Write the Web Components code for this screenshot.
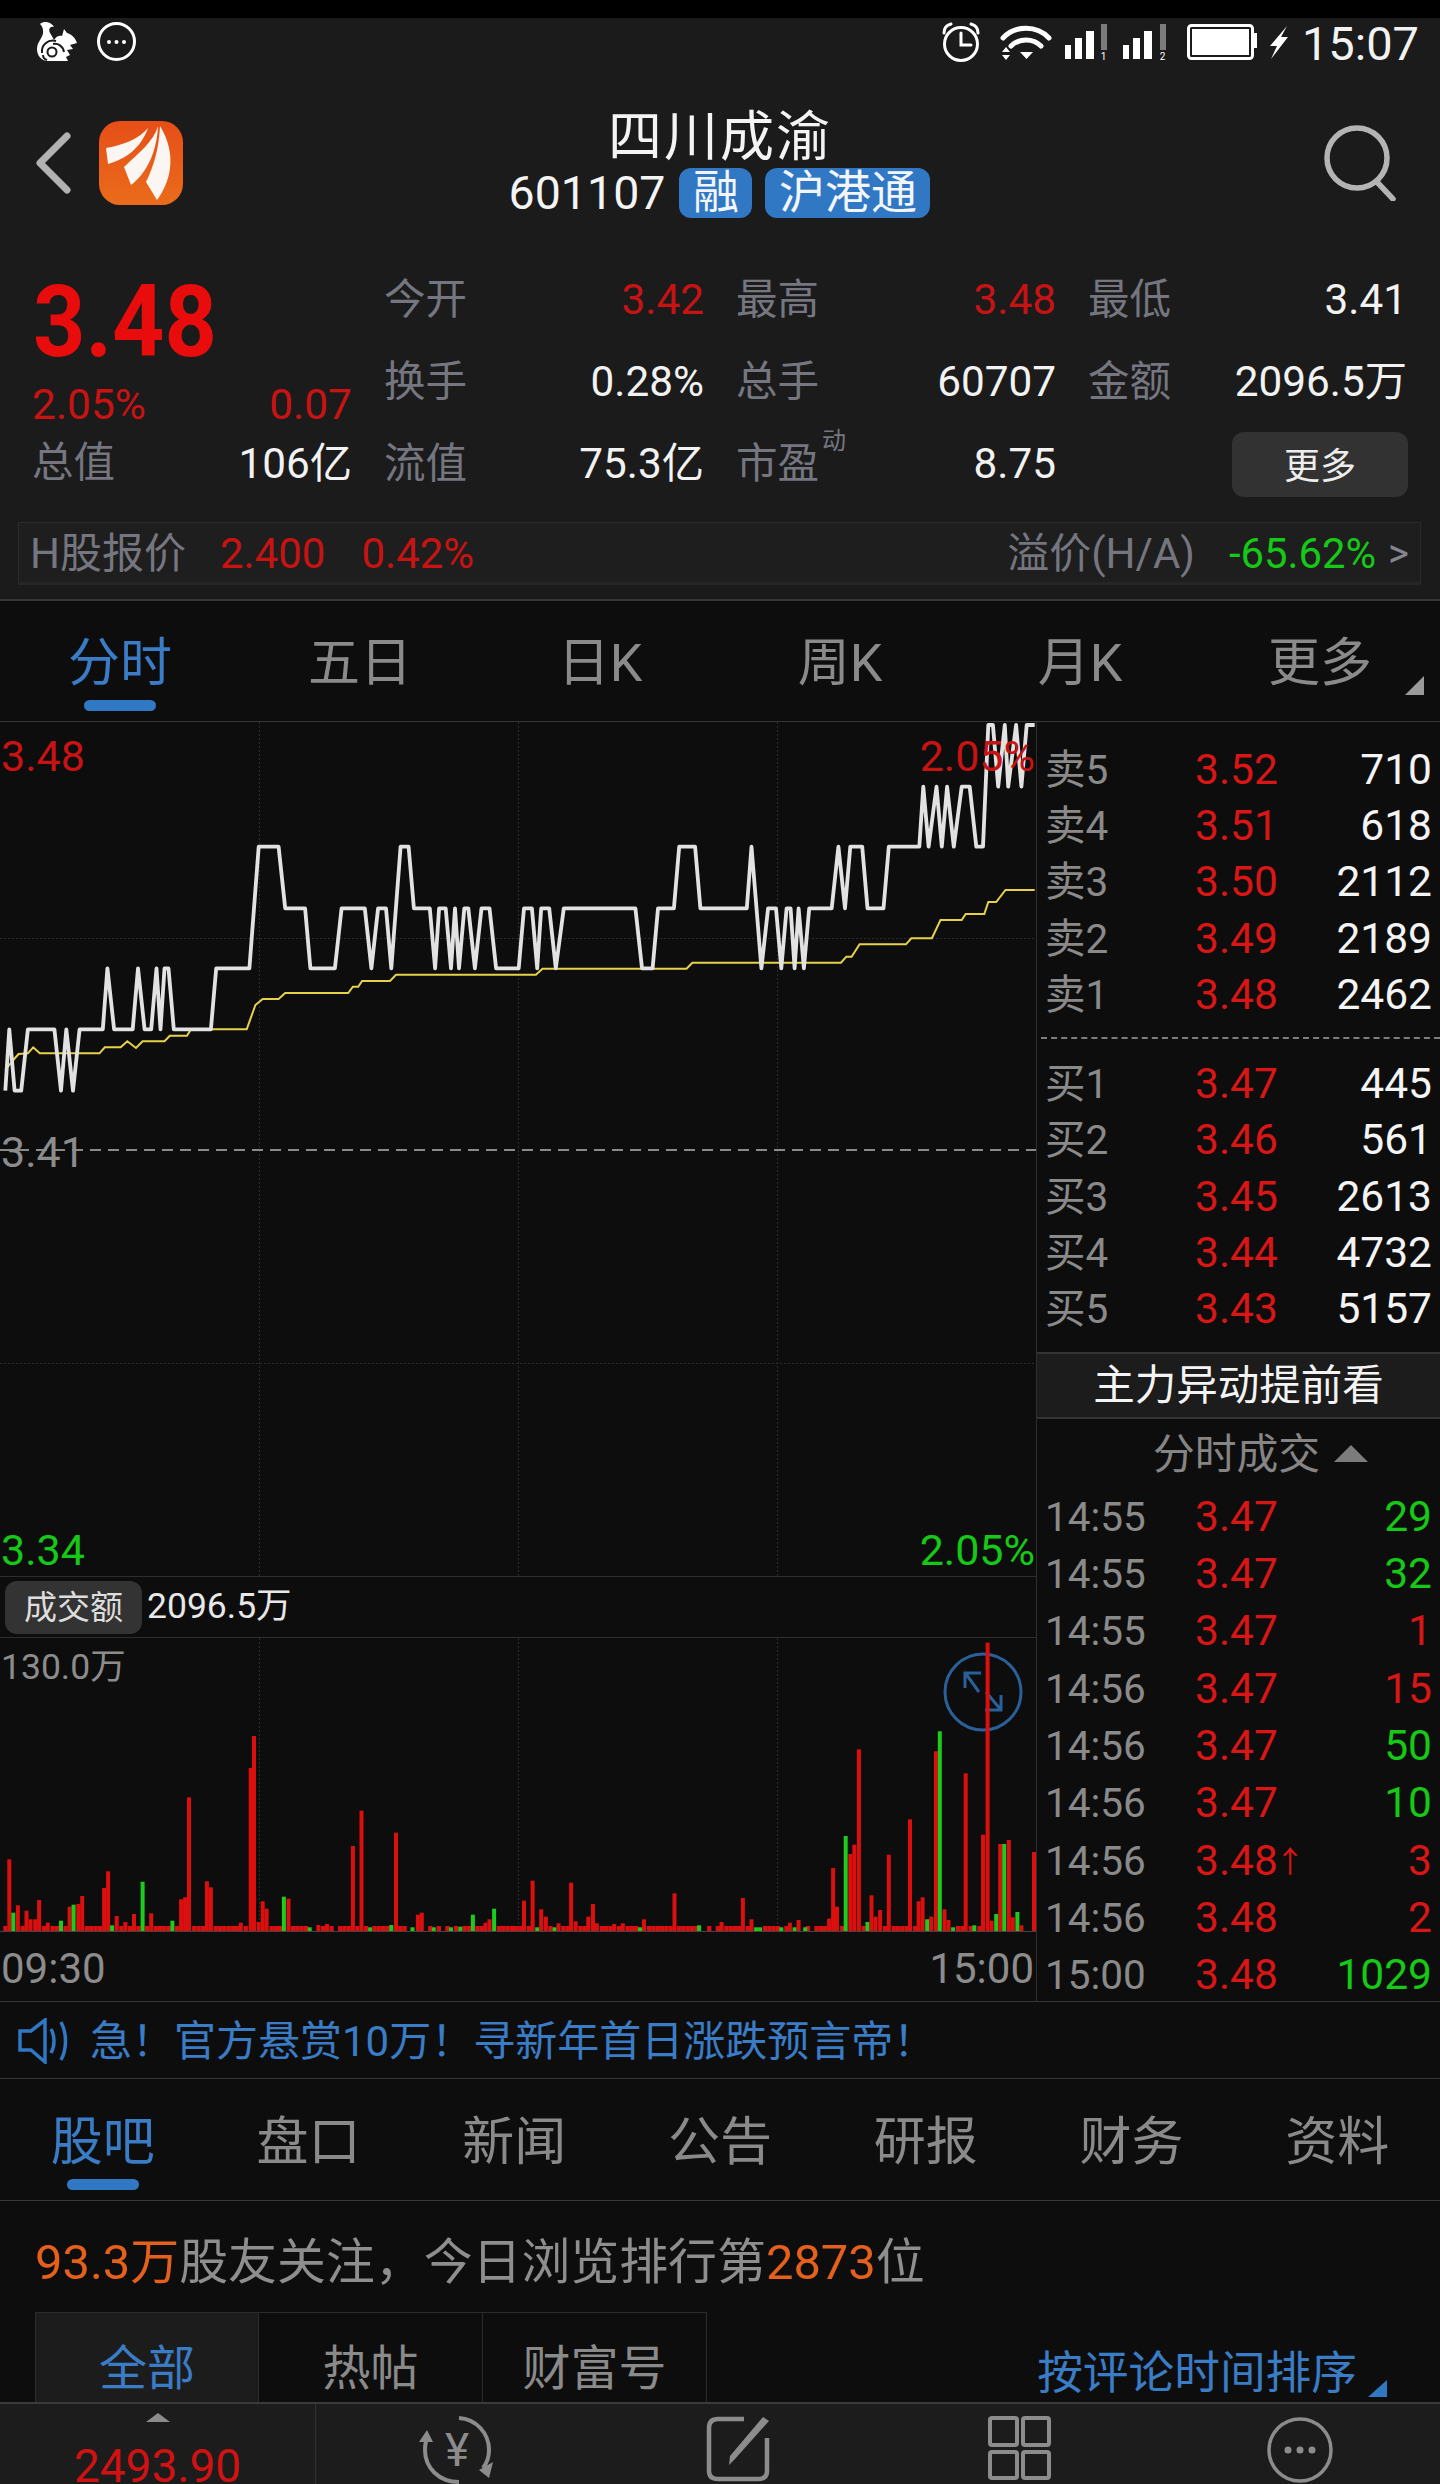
<!DOCTYPE html>
<html lang="zh">
<head>
<meta charset="utf-8">
<title>四川成渝</title>
<style>
html,body{margin:0;padding:0;background:#0d0d0d}
body{width:1440px;height:2484px;overflow:hidden;font-family:Roboto,"Noto Sans CJK SC",sans-serif;color:#eee}
</style>
</head>
<body>
<status-bar></status-bar>
<stock-header></stock-header>
<quote-panel>
  <quote-cell label="今开" tone="red">3.42</quote-cell>
  <quote-cell label="最高" tone="red">3.48</quote-cell>
  <quote-cell label="最低">3.41</quote-cell>
  <quote-cell label="换手">0.28%</quote-cell>
  <quote-cell label="总手">60707</quote-cell>
  <quote-cell label="金额">2096.5万</quote-cell>
  <quote-cell label="流值">75.3亿</quote-cell>
  <quote-cell label="市盈" sup="动">8.75</quote-cell>
  <more-button>更多</more-button>
</quote-panel>
<hk-bar></hk-bar>
<tab-strip kind="period">
  <tab-item active>分时</tab-item><tab-item>五日</tab-item><tab-item>日K</tab-item><tab-item>周K</tab-item><tab-item>月K</tab-item><tab-item corner>更多</tab-item>
</tab-strip>
<market-board></market-board>
<notice-bar>急！官方悬赏10万！寻新年首日涨跌预言帝！</notice-bar>
<tab-strip kind="news">
  <tab-item active>股吧</tab-item><tab-item>盘口</tab-item><tab-item>新闻</tab-item><tab-item>公告</tab-item><tab-item>研报</tab-item><tab-item>财务</tab-item><tab-item>资料</tab-item>
</tab-strip>
<community-panel></community-panel>
<bottom-bar></bottom-bar>

<script>
const FONT='Roboto,"Noto Sans CJK SC",sans-serif';
class Base extends HTMLElement{
  connectedCallback(){
    if(this.shadowRoot)return;
    this.attachShadow({mode:'open'}).innerHTML=this.render();
  }
  attr(n,d=''){return this.getAttribute(n)??d}
}
const reg=(n,f)=>customElements.define(n,class extends Base{render(){return f(this)}});

reg('status-bar',()=>`<style>
:host{display:flex;box-sizing:border-box;height:80px;background:#1b1b1b;border-top:18px solid #000;align-items:flex-start;font-family:${FONT}}
svg{display:block}
.l{margin:4px 0 0 36px}.r{margin:4px 0 0 auto}
.t{margin:10px 21px 0 12px;font-size:47px;line-height:32px;color:#f2f2f2;height:32px}
</style>
<svg class="l" width="102" height="40" viewBox="36 22 102 40">
 <path fill="#fff" d="M40 24C45 20 52 23 54 27 50 26 48 29 50 33 52 36 53 38 54 40 56 36 60 35 62 36L64 29 67 33C71 34 75 37 77 43L70 45 73 49 67 50 70 55 66 57 68 61H48C41 61 37 55 37 49 37 41 44 37 43 31 43 28 42 26 40 24Z"/>
 <g fill="none" stroke="#1b1b1b" stroke-width="2"><circle cx="52" cy="52" r="4.500"/><path d="M42 53c-1-8 6-14 14-12M47 60c-3-1-4-3-4-5M64 52c-1-6-6-9-11-8"/></g>
 <ellipse cx="116.500" cy="41.500" rx="18" ry="18" fill="none" stroke="#fff" stroke-width="3"/>
 <circle cx="109" cy="42" r="2" fill="#fff"/><circle cx="116.500" cy="42" r="2" fill="#fff"/><circle cx="124" cy="42" r="2" fill="#fff"/>
</svg>
<svg class="r" width="350" height="42" viewBox="942 22 350 42">
 <g fill="none" stroke="#fff" stroke-width="3" stroke-linecap="round">
  <circle cx="963" cy="44" r="16.500"/><path d="M963 33v12h10"/>
  <path d="M946 33c0-5 3-8 7-9M980 33c0-5-3-8-7-9" stroke-width="3"/>
  <path d="M1005 38c12-13 34-13 46 0" stroke-width="5"/><path d="M1013 46c8-8 22-8 30 0" stroke-width="5"/>
 </g>
 <path fill="#fff" d="M1022 52h13l-6.500 7zM1004 52l4-5 4 5zM1004 55h8l-4 5z"/>
 <g fill="#fff">
  <rect x="1067" y="45" width="6" height="14"/><rect x="1077" y="38" width="7" height="21"/><rect x="1088" y="31" width="8" height="28"/>
  <rect x="1125" y="45" width="6" height="14"/><rect x="1135" y="38" width="7" height="21"/><rect x="1146" y="31" width="8" height="28"/>
  <text x="1105.500" y="60" font-size="10" text-anchor="middle" font-family="Roboto">1</text>
  <text x="1164.500" y="60" font-size="10" text-anchor="middle" font-family="Roboto">2</text>
 </g>
 <rect x="1103" y="24" width="6" height="26" fill="#7c7c7c"/><rect x="1162" y="24" width="6" height="26" fill="#7c7c7c"/>
 <rect x="1190.500" y="25.500" width="64" height="33" rx="3" fill="none" stroke="#fff" stroke-width="3"/>
 <rect x="1194" y="29" width="57" height="26" fill="#fff"/>
 <path fill="#fff" d="M1256 33h3v15h-3z"/>
 <path fill="#fff" d="M1289 26l-17 20h7l-6 13 17-22h-7z"/>
</svg>
<div class="t">15:07</div>`);

reg('stock-header',()=>`<style>
:host{display:block;position:relative;box-sizing:border-box;height:170px;background:#1b1b1b;font-family:${FONT};color:#f4f4f4}
.row{display:grid;grid-template-columns:1fr auto 1fr;height:100%}
.left{display:flex;align-items:flex-start;padding:41px 0 0 35px}
.back{margin-top:11px}
.logo{margin-left:28px}
.mid{padding-top:29px;display:flex;flex-direction:column;align-items:center}
.title{font-size:54px;line-height:58px;height:59px;letter-spacing:2px}
.sub{display:flex;align-items:center;height:50px;margin-left:-1px}
.code{font-size:46.500px;line-height:50px;margin-right:14px}
.tag{background:#3078c4;color:#f2f6fb;border-radius:12px;height:50px;line-height:48px;font-size:46px;width:73px;text-align:center;margin-right:13px;box-sizing:border-box}
.tag:last-child{margin-right:0;width:165px}
.right{display:flex;justify-content:flex-end;align-items:flex-start;padding:45px 40px 0 0}
</style>
<div class="row">
 <div class="left">
  <svg class="back" width="36" height="62" viewBox="0 0 36 62"><path d="M32 4 5 31l27 27" fill="none" stroke="#b2b2b2" stroke-width="7" stroke-linecap="round" stroke-linejoin="round"/></svg>
  <svg class="logo" width="84" height="84" viewBox="0 0 84 84">
   <defs><linearGradient id="g" x1="0" y1="0" x2="0" y2="1"><stop offset="0" stop-color="#e64e17"/><stop offset="1" stop-color="#ea6c1b"/></linearGradient></defs>
   <rect width="84" height="84" rx="21" fill="url(#g)"/>
   <path fill="#fbf6f2" d="M49 7C41 17 25 24 7 27l2 16c18-5 33-16 40-36z"/>
   <path fill="#fbf6f2" d="M59 5C55 20 40 32 25 46l7 18C48 52 58 30 59 5z"/>
   <path fill="#fbf6f2" d="M61 5c-1 22-6 40-14 56l11 18C71 62 79 34 61 5z"/>
  </svg>
 </div>
 <div class="mid">
  <div class="title">四川成渝</div>
  <div class="sub"><span class="code">601107</span><span class="tag">融</span><span class="tag">沪港通</span></div>
 </div>
 <div class="right">
  <svg width="76" height="76" viewBox="0 0 76 76"><g fill="none" stroke="#b4b4b4" stroke-width="5.500" stroke-linecap="round"><circle cx="33" cy="33" r="30"/><path d="M53 57l16 17"/></g></svg>
 </div>
</div>`);

reg('quote-panel',()=>`<style>
:host{display:grid;box-sizing:border-box;height:253px;background:#1b1b1b;padding:9px 0 0 35px;font-family:${FONT};
 grid-template-columns:315px 318px 318px 317px;column-gap:34px;grid-template-rows:82px 82px 82px;align-items:center}
.main{grid-column:1;grid-row:1/4;align-self:start;display:flex;flex-direction:column;margin-top:-2px}
.price{height:113px;font-size:101px;font-weight:700;line-height:129px;color:#e80c0c;transform:scaleX(.905);transform-origin:0 0;margin-left:-2px}
.sub{height:68px;margin:0 -2px 0 -3px;display:flex;justify-content:space-between;align-items:center;font-size:42.500px;color:#c81313}
.tot{height:52px;margin:-5px -2px 0 -3px;display:flex;justify-content:space-between;align-items:center;font-size:42.300px;color:#f2f2f2}
.tot b{font-weight:400;color:#757680;font-size:41.500px}
</style>
<div class="main"><div class="price">3.48</div>
<div class="sub"><span>2.05%</span><span>0.07</span></div>
<div class="tot"><b>总值</b><span>106亿</span></div></div>
<slot></slot>`);

reg('quote-cell',e=>`<style>
:host{display:flex;justify-content:space-between;align-items:center;height:82px;font-size:41.500px;line-height:1;font-family:${FONT};color:${e.attr('tone')=='red'?'#c81313':'#f2f2f2'}}
.l{color:#757680;position:relative}
sup{position:absolute;left:86px;top:-14px;font-size:24px;line-height:1}
.v{font-size:42.300px;margin-right:-2px}
</style><span class="l">${e.attr('label')}${e.attr('sup')?`<sup>${e.attr('sup')}</sup>`:''}</span><span class="v"><slot></slot></span>`);

reg('more-button',()=>`<style>
:host{display:flex;justify-content:center;align-items:center;justify-self:end;box-sizing:border-box;width:176px;height:65px;margin:1px -3px 0 0;padding-bottom:4px;background:#323232;border-radius:12px;font-size:36px;color:#ededed;font-family:${FONT}}
</style><slot></slot>`);

reg('hk-bar',()=>`<style>
:host{display:block;box-sizing:border-box;height:98px;background:#1b1b1b;padding:19px 19px 14px 18px;border-bottom:2px solid #363636;font-family:${FONT}}
.box{display:flex;align-items:center;box-sizing:border-box;height:63px;padding:2px 11px 0;border:1px solid #2b2b2b;border-bottom:3px solid #262626;background:#1e1e1e;font-size:42px;line-height:1;white-space:nowrap}
.g{color:#757680}.r{color:#c81313}
.a{margin-left:34px}.b{margin-left:36px}
.c{margin-left:auto}.d{color:#16c916;margin-left:34px;font-size:41.800px}
.e{margin-left:12px;color:#858590;font-size:40px}
</style><div class="box">
<span class="g">H股报价</span><span class="r a">2.400</span><span class="r b">0.42%</span>
<span class="g c">溢价(H/A)</span><span class="d">-65.62%</span><span class="e">&gt;</span></div>`);

reg('tab-strip',e=>{const n=e.attr('kind')=='news';return `<style>
:host{display:flex;box-sizing:border-box;height:${n?122:121}px;border-bottom:1px solid #383838;background:#0d0d0d;font-family:${FONT}}
::slotted(tab-item){flex:1 1 0;--top:${n?29:28}px;--gap:1px}
</style><slot></slot>`});

reg('tab-item',e=>{const a=e.hasAttribute('active');return `<style>
:host{display:flex;flex-direction:column;align-items:center;position:relative;padding-top:var(--top);box-sizing:border-box;font-size:52px;line-height:70px;color:${a?'#3a7cc6':'#8a8a8a'}}
i{display:block;width:72px;height:11px;border-radius:6px;background:#3078c4;margin-top:var(--gap)}
.c{position:absolute;right:16px;bottom:26px;width:0;height:0;border-left:19px solid transparent;border-bottom:19px solid #9a9a9a}
</style><span><slot></slot></span>${a?'<i></i>':''}${e.hasAttribute('corner')?'<span class="c"></span>':''}`});

/* ------- charts ------- */
const white=[[8,0],[14,1],[22,0],[32,0],[42,1],[82,1],[92,0],[100,1],[110,0],[120,1],[155,1],[162,2],[172,1],[200,1],[208,2],[218,1],[228,1],[236,2],[242,1],[248,2],[254,2],[262,1],[318,1],[326,2],[376,2],[390,4],[420,4],[430,3],[460,3],[468,2],[505,2],[515,3],[550,3],[560,2],[570,3],[582,3],[590,2],[604,4],[616,4],[624,3],[648,3],[656,2],[662,3],[672,3],[680,2],[686,3],[692,2],[700,3],[706,3],[716,2],[726,3],[738,3],[748,2],[782,2],[790,3],[802,3],[810,2],[816,3],[828,3],[838,2],[850,3],[958,3],[968,2],[984,2],[992,3],[1016,3],[1024,4],[1048,4],[1056,3],[1126,3],[1133,4],[1148,2],[1158,3],[1170,3],[1178,2],[1186,3],[1192,3],[1198,2],[1204,3],[1212,2],[1220,3],[1254,3],[1264,4],[1274,3],[1282,4],[1300,4],[1308,3],[1332,3],[1340,4],[1386,4],[1392,5],[1400,4],[1412,5],[1420,4],[1428,5],[1438,4],[1450,5],[1462,5],[1472,4],[1482,4],[1490,6],[1497,6],[1505,5],[1515,6],[1520,5],[1532,6],[1540,5],[1548,6],[1560,6]];
const levels=[1172,988,805,625,440,260,75];
const yellow=[[8,1110],[20,1080],[28,1062],[42,1060],[50,1042],[60,1060],[150,1060],[158,1042],[182,1042],[192,1024],[205,1044],[215,1024],[248,1024],[256,1007],[282,1007],[288,988],[372,988],[385,915],[396,897],[420,897],[430,879],[525,879],[532,860],[540,860],[546,843],[588,843],[597,824],[808,824],[818,806],[1035,806],[1044,788],[1268,788],[1276,770],[1284,770],[1296,733],[1366,733],[1374,715],[1405,715],[1418,660],[1450,660],[1456,642],[1484,642],[1490,606],[1502,606],[1516,570],[1560,570]];
const X=z=>+(z/1.5077).toFixed(1);
const pts=(a,f)=>a.map(p=>X(p[0])+','+(700+f(p[1])/3-722).toFixed(1)).join(' ');
const grid=(h)=>[259,518,777].map(x=>`<line x1="${x}.5" y1="0" x2="${x}.5" y2="${h}" stroke="#2c2c2c" stroke-dasharray="2 2"/>`).join('');

reg('price-chart',()=>`<style>
:host{display:block;position:relative;height:854px;font-family:${FONT};font-size:43px;line-height:1}
svg{display:block}
span{position:absolute}
.r{color:#c81313}.g{color:#16c916}.n{color:#8c8c8c}
</style>
<svg width="1036" height="854" viewBox="0 0 1036 854">${grid(854)}
 ${[216,641].map(y=>`<line x1="0" y1="${y}.5" x2="1036" y2="${y}.5" stroke="#2c2c2c" stroke-dasharray="2 2"/>`).join('')}
 <line x1="0" y1="428" x2="1036" y2="428" stroke="#8a8a8a" stroke-width="2" stroke-dasharray="11 7"/>
 <polyline points="${pts(yellow,v=>v)}" fill="none" stroke="#e6d24a" stroke-width="2"/>
 <polyline points="${pts(white,v=>levels[v])}" fill="none" stroke="#e2e2e2" stroke-width="3.800" stroke-linejoin="round"/>
</svg>
<span class="r" style="left:1px;top:13px">3.48</span>
<span class="r" style="right:1px;top:13px">2.05%</span>
<span class="n" style="left:1px;top:409px">3.41</span>
<span class="g" style="left:1px;bottom:4px">3.34</span>
<span class="g" style="right:1px;bottom:4px">2.05%</span>`);

const tall=[[14,658],[20,818,1],[27,796],[40,812],[46,838],[53,838],[59,780],[72,848],[92,842,1],[105,800],[111,794,1],[118,792],[124,768],[157,744],[163,694],[169,856,1],[176,828],[189,846],[202,822],[215,725,1],[228,820],[260,842,1],[273,778],[279,772],[285,472],[312,724],[318,742],[363,848],[378,384],[383,288],[390,846],[396,784],[402,806],[428,770,1],[435,776],[467,862,1],[480,855],[493,852],[532,618],[545,512],[558,862,1],[590,855,1],[597,578],[622,862,1],[630,824],[636,818],[654,862,1],[680,862,1],[694,860,1],[713,824,1],[732,848],[738,838],[745,806,1],[790,782],[803,722],[810,862,1],[816,808],[823,830],[836,862,1],[842,850],[861,728],[868,844],[887,830],[894,792],[900,850],[926,852],[939,850],[965,862,1],[971,838],[1017,760],[1054,856,1],[1088,846],[1120,774],[1133,838],[1140,862,1],[1146,862,1],[1178,862,1],[1191,848],[1198,862,1],[1204,840],[1214,862,1],[1250,836],[1256,684],[1262,800],[1275,588,1],[1282,642],[1288,614],[1295,328],[1308,846,1],[1314,766],[1320,830],[1327,810],[1340,644],[1372,538],[1385,784],[1391,772],[1398,838,1],[1404,830],[1411,334],[1417,274,1],[1424,808],[1430,840],[1437,862,1],[1456,400],[1469,856,1],[1482,584],[1489,8],[1495,842],[1502,822,1],[1508,612],[1514,612,1],[1521,600],[1527,832],[1534,816,1],[1540,856],[1559,636]];
const gaps=[[470,476],[500,510],[610,618],[626,646],[662,668],[1060,1066],[1072,1078],[1222,1228],[1546,1556]];
function volBars(){
  let s='',used=new Set(tall.map(t=>Math.round((t[0]-8)/6.47)));
  for(let i=0;i<241;i++){
    const z=8+6.47*i;
    if(used.has(i)||gaps.some(g=>z>=g[0]&&z<=g[1]))continue;
    s+=`<rect x="${(X(z)-2).toFixed(1)}" y="288" width="4.300" height="6" fill="#dc0f0f"/>`;
  }
  for(const t of tall){
    s+=`<rect x="${(X(t[0])-2).toFixed(1)}" y="${(2+t[1]/3).toFixed(1)}" width="4" height="${(292-t[1]/3).toFixed(1)}" fill="${t[2]?'#1dcb1d':'#dc0f0f'}"/>`;
  }
  return s;
}
reg('volume-chart',()=>`<style>
:host{display:block;position:relative;height:294px;font-family:${FONT}}
svg{display:block}
span{position:absolute;left:1px;top:12px;font-size:35.500px;line-height:1;color:#8c8c8c}
</style>
<svg width="1036" height="294" viewBox="0 0 1036 294">${grid(294)}
 <g fill="none" stroke="#2a6099" stroke-width="3">
  <circle cx="983" cy="54" r="38"/>
  <path d="M965 50V35h16M966 36l13 18M1001 57v15h-16M1001 72l-15-18"/>
 </g>
 ${volBars()}
 <line x1="0" y1="293.500" x2="1036" y2="293.500" stroke="#444"/>
</svg><span>130.0万</span>`);

reg('volume-head',()=>`<style>
:host{display:flex;align-items:center;box-sizing:border-box;height:62px;border-top:1px solid #2e2e2e;border-bottom:1px solid #2e2e2e;padding-left:5px;font-family:${FONT};font-size:35.500px;line-height:1;color:#e8e8e8}
b{font-weight:400;display:flex;align-items:center;justify-content:center;width:137px;height:53px;border-radius:12px;background:#333;font-size:33px;margin-right:5px;color:#ddd}
</style><b>成交额</b><span>2096.5万</span>`);

reg('time-axis',()=>`<style>
:host{display:flex;justify-content:space-between;box-sizing:border-box;height:68px;padding:15px 2px 0 1px;font-family:${FONT};font-size:42px;line-height:1.050;color:#8c8c8c}
</style><span>09:30</span><span>15:00</span>`);

reg('book-row',e=>`<style>
:host{display:grid;grid-template-columns:150px 1fr auto;align-items:center;height:56.250px;padding:0 8px 0 8px;font-size:40.500px;line-height:1;font-family:${FONT}}
.l{color:#8a8a8a}.p{color:#d81616;font-size:42.500px}.v{color:#f4f4f4;font-size:42.500px}
</style><span class="l">${e.attr('label')}</span><span class="p">${e.attr('price')}</span><span class="v"><slot></slot></span>`);

reg('trade-row',e=>`<style>
:host{display:grid;grid-template-columns:150px 1fr auto;align-items:center;height:57.300px;padding:0 8px 0 8px;font-size:40.500px;line-height:1;font-family:${FONT}}
.l{color:#8a8a8a}.p{color:#d81616;font-size:42.500px}.v{font-size:42.500px;color:${e.attr('dir')=='g'?'#16c916':'#d81616'}}
i{font-style:normal;font-size:30px;position:relative;top:-3px;margin-left:-3px}
</style><span class="l">${e.attr('time')}</span><span class="p">${e.attr('price')}${e.hasAttribute('up')?'<i>↑</i>':''}</span><span class="v"><slot></slot></span>`);

reg('market-board',()=>`<style>
:host{display:grid;grid-template-columns:1036px 404px;height:1280px;border-bottom:1px solid #383838;box-sizing:border-box;overflow:hidden;background:#0d0d0d;font-family:${FONT}}
.right{border-left:1px solid #2e2e2e;box-sizing:border-box;height:1279px;overflow:hidden;padding-top:20px}
.dash{height:0;border-top:2px dashed #7d7d7d;margin:14px 0 17px 4px}
.ban{margin-top:14px;height:67px;box-sizing:border-box;padding-top:2px;border-top:2px solid #333;border-bottom:2px solid #333;background:#1c1c1c;display:flex;align-items:center;justify-content:center;font-size:41.500px;line-height:1;color:#f4f4f4}
.head{height:70px;padding:3px 0 0 44px;box-sizing:border-box;display:flex;align-items:center;justify-content:center;font-size:41.800px;line-height:1;color:#858585;gap:14px}
.head i{width:0;height:0;border:17px solid transparent;border-top:0;border-bottom:17px solid #7c7c7c;margin-top:-4px}
</style>
<div>
 <price-chart></price-chart><volume-head></volume-head><volume-chart></volume-chart><time-axis></time-axis>
</div>
<div class="right">
 <book-row label="卖5" price="3.52">710</book-row>
 <book-row label="卖4" price="3.51">618</book-row>
 <book-row label="卖3" price="3.50">2112</book-row>
 <book-row label="卖2" price="3.49">2189</book-row>
 <book-row label="卖1" price="3.48">2462</book-row>
 <div class="dash"></div>
 <book-row label="买1" price="3.47">445</book-row>
 <book-row label="买2" price="3.46">561</book-row>
 <book-row label="买3" price="3.45">2613</book-row>
 <book-row label="买4" price="3.44">4732</book-row>
 <book-row label="买5" price="3.43">5157</book-row>
 <div class="ban">主力异动提前看</div>
 <div class="head"><span>分时成交</span><i></i></div>
 <trade-row time="14:55" price="3.47" dir="g">29</trade-row>
 <trade-row time="14:55" price="3.47" dir="g">32</trade-row>
 <trade-row time="14:55" price="3.47" dir="r">1</trade-row>
 <trade-row time="14:56" price="3.47" dir="r">15</trade-row>
 <trade-row time="14:56" price="3.47" dir="g">50</trade-row>
 <trade-row time="14:56" price="3.47" dir="g">10</trade-row>
 <trade-row time="14:56" price="3.48" dir="r" up>3</trade-row>
 <trade-row time="14:56" price="3.48" dir="r">2</trade-row>
 <trade-row time="15:00" price="3.48" dir="g">1029</trade-row>
</div>`);

reg('notice-bar',()=>`<style>
:host{display:flex;align-items:center;box-sizing:border-box;height:77px;border-bottom:1px solid #383838;padding:2px 0 0 18px;background:#0d0d0d;font-family:${FONT};font-size:42px;line-height:1;color:#3a7cc6;white-space:nowrap}
svg{display:block;margin-right:18px;flex:none}
span{position:relative;top:1px}
</style>
<svg width="54" height="46" viewBox="0 0 54 46"><g fill="none" stroke="#3078c4" stroke-width="3.500"><path d="M2 13h11L27 2v42L13 32H2z"/><path d="M33 11c4 7 4 17 0 24M43 4c6 11 6 27 0 38"/></g></svg>
<span><slot></slot></span>`);

reg('community-panel',()=>`<style>
:host{display:block;box-sizing:border-box;height:201px;background:#0d0d0d;padding:0 0 0 35px;font-family:${FONT};overflow:hidden}
.s{height:111px;display:flex;align-items:center;font-size:48.900px;line-height:1;color:#8e8e8e;padding-top:14px;box-sizing:border-box;white-space:nowrap}
.s b{font-weight:400;color:#e4601c}
.f{display:flex;height:90px;align-items:stretch}
.c{width:224px;box-sizing:border-box;border:1px solid #2b2b2b;border-bottom:0;border-left:0;font-size:48px;line-height:1;color:#8a8a8a;display:flex;justify-content:center;padding-top:32px}
.c:first-child{border-left:1px solid #2b2b2b;background:#1c1c1c;color:#3a7cc6}
.o{margin-left:auto;padding:39px 53px 0 0;display:flex;font-size:45.700px;line-height:1;color:#3a7cc6;position:relative}
.o i{position:absolute;right:53px;top:68px;width:0;height:0;border-left:19px solid transparent;border-bottom:17px solid #3078c4}
.o span{margin-right:30px}
</style>
<div class="s"><b>93.3万</b>股友关注，今日浏览排行第<b>2873</b>位</div>
<div class="f"><div class="c">全部</div><div class="c">热帖</div><div class="c">财富号</div>
<div class="o"><span>按评论时间排序</span><i></i></div></div>`);

reg('bottom-bar',()=>`<style>
:host{display:flex;box-sizing:border-box;height:82px;background:#1c1c1c;border-top:2px solid #3a3a3a;overflow:hidden;font-family:${FONT}}
.idx{width:316px;box-sizing:border-box;border-right:1px solid #333;display:flex;flex-direction:column;align-items:center;flex:none}
.idx i{width:0;height:0;border:12px solid transparent;border-top:0;border-bottom:9px solid #8c8c8c;margin-top:9px}
.idx span{font-size:46px;line-height:36px;height:36px;color:#cf1212;margin-top:26px}
.b{flex:1 1 0;display:flex;justify-content:center;padding-top:12px}
svg{display:block;overflow:visible}
text{font-family:${FONT}}
</style>
<div class="idx"><i></i><span>2493.90</span></div>
<div class="b"><svg width="80" height="68" viewBox="0 0 80 68"><g fill="none" stroke="#8c8c8c" stroke-width="4"><path d="M42 2c17 1 30 15 30 32 0 7-2 13-6 18"/><path d="M42 66C22 66 8 52 8 34c0-5 1-10 3-14"/></g><path fill="#8c8c8c" d="M2 26 10 14l6 12zM62 54l14-8-4 16z"/><text x="40" y="50" font-size="46" fill="#8c8c8c" text-anchor="middle">¥</text></svg></div>
<div class="b"><svg width="64" height="66" viewBox="0 0 64 66"><path d="M38 3H12C6 3 3 6 3 12v43c0 5 3 8 9 8h40c6 0 9-3 9-8V22" fill="none" stroke="#8c8c8c" stroke-width="4.500"/><path fill="#8c8c8c" d="M57 1l6 4-34 38-6 6 1-9z"/></svg></div>
<div class="b"><svg width="64" height="64" viewBox="0 0 64 64"><g fill="none" stroke="#8c8c8c" stroke-width="4"><rect x="3" y="2" width="27" height="27" rx="2"/><rect x="36" y="2" width="26" height="27" rx="2"/><rect x="3" y="36" width="27" height="26" rx="2"/><rect x="36" y="36" width="26" height="26" rx="2"/></g></svg></div>
<div class="b"><svg width="66" height="68" viewBox="0 0 66 68"><circle cx="33" cy="34" r="31" fill="none" stroke="#8c8c8c" stroke-width="3.500"/><g fill="#8c8c8c"><circle cx="21" cy="34" r="3.500"/><circle cx="33" cy="34" r="3.500"/><circle cx="45" cy="34" r="3.500"/></g></svg></div>`);
</script>
</body>
</html>
